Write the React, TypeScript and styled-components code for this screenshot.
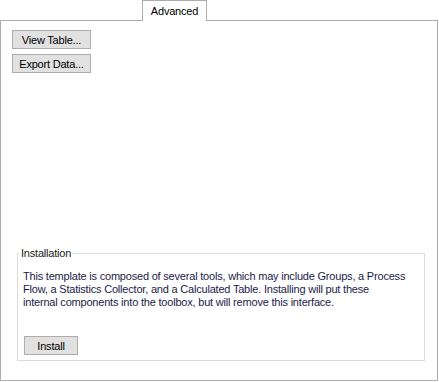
import styled, {createGlobalStyle} from "styled-components";
import React from "react";

const GlobalStyle = createGlobalStyle`
    html, body {
        margin: 0;
        padding: 0;
        background: #ffffff;
    }
    body {
        font-family: "Liberation Sans", Arial, sans-serif;
        font-size: 11px;
        letter-spacing: -0.2px;
    }
`

const descriptionLines = [
    "This template is composed of several tools, which may include Groups, a Process",
    "Flow, a Statistics Collector, and a Calculated Table. Installing will put these",
    "internal components into the toolbox, but will remove this interface.",
]

export default function App(){
    return(
        <>
            <GlobalStyle/>
            <Window>
                <TabStrip>
                    <Tab>Advanced</Tab>
                </TabStrip>
                <Panel>
                    <ActionButton>View Table...</ActionButton>
                    <ActionButton>Export Data...</ActionButton>
                    <GroupBox>
                        <GroupLabel>Installation</GroupLabel>
                        <Description>
                            {descriptionLines.map((line, key) => (
                                <Line key={key}>{line}</Line>
                            ))}
                        </Description>
                        <InstallButton>Install</InstallButton>
                    </GroupBox>
                </Panel>
            </Window>
        </>
    )
}

const Window = styled.div`
    width: 439px;
    height: 382px;
    background: #ffffff;
    display: flex;
    flex-direction: column;
`

const TabStrip = styled.div`
    display: flex;
    padding-left: 142px;
    height: 21px;
`

const Tab = styled.div`
    position: relative;
    z-index: 1;
    box-sizing: border-box;
    width: 65px;
    height: 21px;
    border: 1px solid #adadad;
    border-bottom: none;
    background: #ffffff;
    color: #000000;
    display: flex;
    justify-content: center;
    align-items: center;
    padding-bottom: 1px;
`

const Panel = styled.div`
    box-sizing: border-box;
    margin-top: -1px;
    width: 438px;
    height: 361px;
    border: 1px solid #adadad;
    padding: 9px 12px 19px 11px;
    display: flex;
    flex-direction: column;
    align-items: flex-start;
`

const ActionButton = styled.button`
    box-sizing: border-box;
    width: 79px;
    height: 19px;
    margin: 0 0 5px 0;
    padding: 0;
    background: #e1e1e1;
    border: 1px solid #adadad;
    border-radius: 0;
    font-family: inherit;
    font-size: 11px;
    letter-spacing: inherit;
    color: #000000;
`

const GroupBox = styled.fieldset`
    box-sizing: border-box;
    margin: auto 0 0 5px;
    width: 408px;
    padding: 0 6px 5px 0;
    border: 1px solid #dcdcdc;
    display: flex;
    flex-direction: column;
    align-items: flex-start;
`

const GroupLabel = styled.legend`
    margin-left: 1px;
    padding: 0 2px;
    line-height: 13px;
    color: #1a1a1a;
`

const Description = styled.div`
    margin: 10px 0 0 5px;
    line-height: 13px;
    color: #1c1c48;
`

const Line = styled.div`
    white-space: nowrap;
`

const InstallButton = styled(ActionButton)`
    width: 54px;
    margin: 27px 0 0 6px;
`
